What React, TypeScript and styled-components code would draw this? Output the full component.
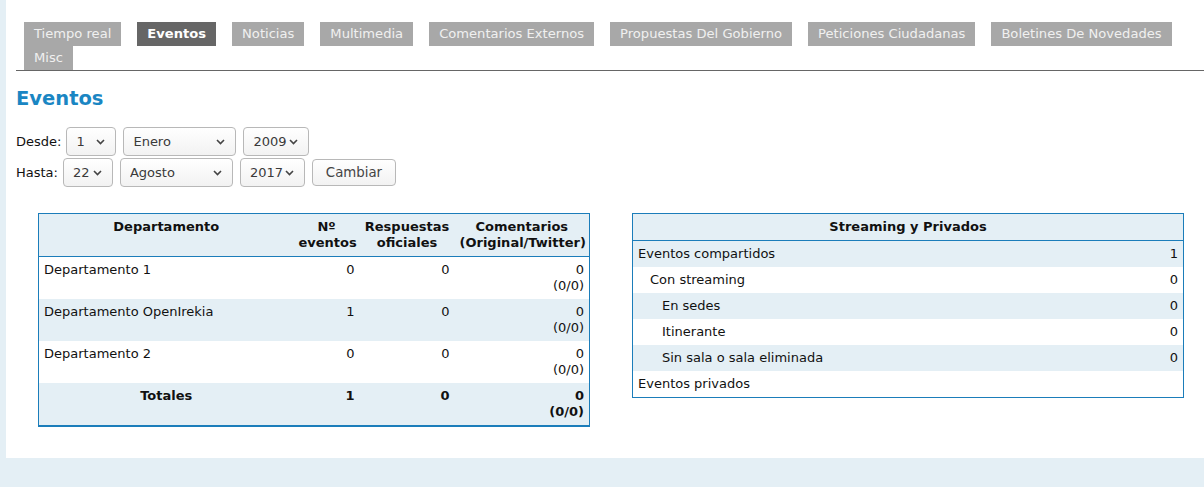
import React from "react";
import styled, { createGlobalStyle } from "styled-components";

const GlobalStyle = createGlobalStyle`
  html, body {
    margin: 0;
    padding: 0;
    background: #e4eff5;
    font-family: "DejaVu Sans", sans-serif;
    font-size: 13px;
    color: #111;
  }
`;

const Page = styled.div`
  margin-left: 6px;
  background: #fff;
  padding: 22px 0 31px 10px;
`;

const TabBar = styled.div`
  display: flex;
  flex-wrap: wrap;
  column-gap: 16px;
  padding-left: 8px;
  border-bottom: 1px solid #666;
`;

const Tab = styled.a<{ $active?: boolean }>`
  display: block;
  height: 24px;
  line-height: 24px;
  padding: 0 10px;
  font-size: 13.1px;
  background: ${(p) => (p.$active ? "#666" : "#a8a8a8")};
  color: ${(p) => (p.$active ? "#fff" : "#f0f0f0")};
  font-weight: ${(p) => (p.$active ? "bold" : "normal")};
  text-decoration: none;
  white-space: nowrap;
`;

const Title = styled.h2`
  margin: 16px 0 16px 0;
  font-size: 19.5px;
  line-height: 24px;
  font-weight: bold;
  color: #1a86c3;
`;

const Form = styled.form`
  display: flex;
  flex-direction: column;
  gap: 2px;
`;

const FormRow = styled.div`
  display: flex;
  align-items: center;
  gap: 7px;
`;

const Label = styled.label`
  font-size: 13px;
  margin-right: -2px;
`;

const SelectWrap = styled.span<{ $w: number }>`
  position: relative;
  display: inline-block;
  width: ${(p) => p.$w}px;
  height: 29px;
`;

const NativeSelect = styled.select`
  appearance: none;
  -webkit-appearance: none;
  width: 100%;
  height: 100%;
  box-sizing: border-box;
  border: 1px solid #b8b8b8;
  border-radius: 4px;
  background: linear-gradient(#ffffff, #f2f2f2);
  font-family: "DejaVu Sans", sans-serif;
  font-size: 13px;
  color: #3a3a3a;
  padding: 0 0 0 9px;
  margin: 0;
`;

const Chevron = styled.svg`
  position: absolute;
  right: 11px;
  top: 12px;
  pointer-events: none;
`;

const Button = styled.button`
  height: 27px;
  width: 84px;
  box-sizing: border-box;
  border: 1px solid #b8b8b8;
  border-radius: 4px;
  background: linear-gradient(#ffffff, #f2f2f2);
  font-family: "DejaVu Sans", sans-serif;
  font-size: 13.33px;
  color: #444;
  padding: 0;
`;

const Tables = styled.div`
  display: flex;
  align-items: flex-start;
  gap: 42px;
  margin: 26px 0 0 22px;
`;

const Table = styled.table<{ $thickBottom?: boolean }>`
  width: 551px;
  border-collapse: collapse;
  table-layout: fixed;
  border: 1px solid #1b7dba;
  border-bottom-width: ${(p) => (p.$thickBottom ? "2px" : "1px")};
  font-size: 13px;
  line-height: 16px;
`;

const Col = styled.col<{ $w: number }>`
  width: ${(p) => p.$w}px;
`;

const HeadRow = styled.tr`
  background: #e4eff5;
  border-bottom: 1px solid #1b7dba;
`;

const Th = styled.th`
  padding: 5px 5px;
  text-align: center;
  vertical-align: top;
  font-weight: bold;
  color: #111;
`;

const Row = styled.tr<{ $alt?: boolean }>`
  background: ${(p) => (p.$alt ? "#e4eff5" : "#fff")};
`;

const Td = styled.td<{ $align?: "left" | "right" | "center"; $bold?: boolean; $indent?: number }>`
  padding: 5px 5px 5px ${(p) => 5 + (p.$indent ?? 0)}px;
  text-align: ${(p) => p.$align ?? "left"};
  vertical-align: top;
  font-weight: ${(p) => (p.$bold ? "bold" : "normal")};
  color: #111;
`;

const Cell2 = styled.div`
  white-space: nowrap;
`;

const tabs = [
  "Tiempo real",
  "Eventos",
  "Noticias",
  "Multimedia",
  "Comentarios Externos",
  "Propuestas Del Gobierno",
  "Peticiones Ciudadanas",
  "Boletines De Novedades",
  "Misc",
];

const Select: React.FC<{ w: number; value: string; options: string[] }> = ({ w, value, options }) => (
  <SelectWrap $w={w}>
    <NativeSelect defaultValue={value}>
      {options.map((o) => (
        <option key={o}>{o}</option>
      ))}
    </NativeSelect>
    <Chevron width="9" height="6" viewBox="0 0 9 6">
      <polyline points="1,1 4.5,4.5 8,1" fill="none" stroke="#444" strokeWidth="1.6" />
    </Chevron>
  </SelectWrap>
);

const months = ["Enero", "Febrero", "Marzo", "Abril", "Mayo", "Junio", "Julio", "Agosto", "Septiembre", "Octubre", "Noviembre", "Diciembre"];
const days = Array.from({ length: 31 }, (_, i) => String(i + 1));
const years = Array.from({ length: 9 }, (_, i) => String(2009 + i));

const deps = [
  { name: "Departamento 1", ev: 0 },
  { name: "Departamento OpenIrekia", ev: 1 },
  { name: "Departamento 2", ev: 0 },
];

const streaming = [
  { label: "Eventos compartidos", indent: 0, v: "1" },
  { label: "Con streaming", indent: 12, v: "0" },
  { label: "En sedes", indent: 24, v: "0" },
  { label: "Itinerante", indent: 24, v: "0" },
  { label: "Sin sala o sala eliminada", indent: 24, v: "0" },
  { label: "Eventos privados", indent: 0, v: "" },
];

export default function App() {
  return (
    <>
      <GlobalStyle />
      <Page>
        <TabBar>
          {tabs.map((t) => (
            <Tab key={t} href="#" $active={t === "Eventos"}>
              {t}
            </Tab>
          ))}
        </TabBar>
        <Title>Eventos</Title>
        <Form onSubmit={(e) => e.preventDefault()}>
          <FormRow>
            <Label>Desde:</Label>
            <Select w={50} value="1" options={days} />
            <Select w={113} value="Enero" options={months} />
            <Select w={66} value="2009" options={years} />
          </FormRow>
          <FormRow>
            <Label>Hasta:</Label>
            <Select w={50} value="22" options={days} />
            <Select w={113} value="Agosto" options={months} />
            <Select w={65} value="2017" options={years} />
            <Button type="submit">Cambiar</Button>
          </FormRow>
        </Form>
        <Tables>
          <Table $thickBottom>
            <colgroup>
              <Col $w={255} />
              <Col $w={66} />
              <Col $w={95} />
              <Col $w={135} />
            </colgroup>
            <thead>
              <HeadRow>
                <Th>Departamento</Th>
                <Th>
                  Nº
                  <br />
                  eventos
                </Th>
                <Th>
                  Respuestas
                  <br />
                  oficiales
                </Th>
                <Th>
                  Comentarios
                  <br />
                  (Original/Twitter)
                </Th>
              </HeadRow>
            </thead>
            <tbody>
              {deps.map((d, i) => (
                <Row key={d.name} $alt={i % 2 === 1}>
                  <Td>{d.name}</Td>
                  <Td $align="right">{d.ev}</Td>
                  <Td $align="right">0</Td>
                  <Td $align="right">
                    <Cell2>0</Cell2>
                    <Cell2>(0/0)</Cell2>
                  </Td>
                </Row>
              ))}
              <Row $alt>
                <Td $align="center" $bold>
                  Totales
                </Td>
                <Td $align="right" $bold>
                  1
                </Td>
                <Td $align="right" $bold>
                  0
                </Td>
                <Td $align="right" $bold>
                  <Cell2>0</Cell2>
                  <Cell2>(0/0)</Cell2>
                </Td>
              </Row>
            </tbody>
          </Table>
          <Table>
            <colgroup>
              <Col $w={450} />
              <Col $w={101} />
            </colgroup>
            <thead>
              <HeadRow>
                <Th colSpan={2}>Streaming y Privados</Th>
              </HeadRow>
            </thead>
            <tbody>
              {streaming.map((s, i) => (
                <Row key={s.label} $alt={i % 2 === 0}>
                  <Td $indent={s.indent}>{s.label}</Td>
                  <Td $align="right">{s.v}</Td>
                </Row>
              ))}
            </tbody>
          </Table>
        </Tables>
      </Page>
    </>
  );
}
